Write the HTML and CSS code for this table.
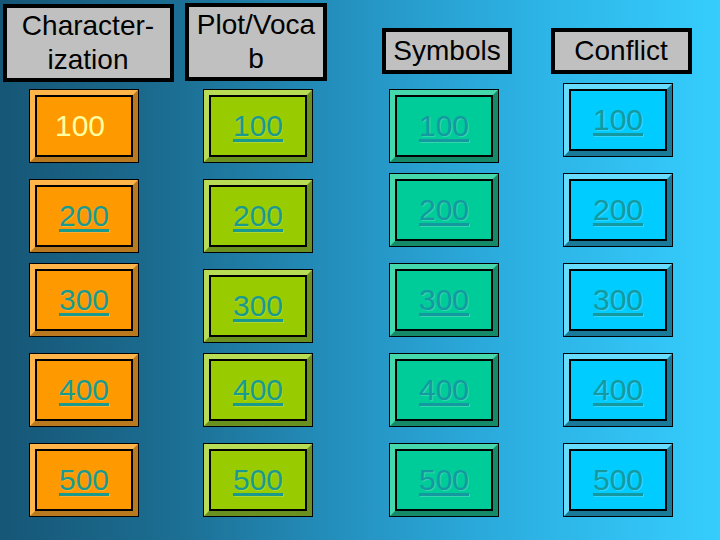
FILE: index.html
```html
<!DOCTYPE html>
<html>
<head>
<meta charset="utf-8">
<link rel="stylesheet" href="styles.css">
</head>
<body>
<div class="board">
  <div class="head head-char">Character-<br>ization</div>
  <div class="head head-plot">Plot/Voca<br>b</div>
  <div class="head head-sym">Symbols</div>
  <div class="head head-con">Conflict</div>

  <div class="btn c1 low"><span class="done">100</span></div>
  <div class="btn c2 low"><a href="#">100</a></div>
  <div class="btn c3 low"><a href="#">100</a></div>
  <div class="btn c4"><a href="#">100</a></div>

  <div class="btn c1 low"><a href="#">200</a></div>
  <div class="btn c2 low"><a href="#">200</a></div>
  <div class="btn c3"><a href="#">200</a></div>
  <div class="btn c4"><a href="#">200</a></div>

  <div class="btn c1"><a href="#">300</a></div>
  <div class="btn c2 low"><a href="#">300</a></div>
  <div class="btn c3"><a href="#">300</a></div>
  <div class="btn c4"><a href="#">300</a></div>

  <div class="btn c1"><a href="#">400</a></div>
  <div class="btn c2"><a href="#">400</a></div>
  <div class="btn c3"><a href="#">400</a></div>
  <div class="btn c4"><a href="#">400</a></div>

  <div class="btn c1"><a href="#">500</a></div>
  <div class="btn c2"><a href="#">500</a></div>
  <div class="btn c3"><a href="#">500</a></div>
  <div class="btn c4"><a href="#">500</a></div>
</div>
</body>
</html>
```
FILE: styles.css
```css
html, body {
  margin: 0;
  padding: 0;
}
body {
  width: 720px;
  height: 540px;
  overflow: hidden;
  background: linear-gradient(to right, #165676 0%, #1c6f94 25%, #2594c3 50%, #2db4e6 75%, #35cdfd 100%);
  font-family: "Liberation Sans", Arial, sans-serif;
}
.board {
  display: grid;
  grid-template-columns: 168px 180px 192px 156px;
  grid-template-rows: 83px repeat(5, 90px);
  justify-items: center;
  align-items: start;
}
.head {
  box-sizing: border-box;
  border: 4px solid #000;
  background: #c0c0c0;
  color: #000;
  font-size: 28px;
  line-height: 34px;
  text-align: center;
  display: flex;
  align-items: center;
  justify-content: center;
}
.head-char { width: 171px; height: 78px; margin-top: 4px; margin-left: 8px; }
.head-plot { width: 142px; height: 78px; margin-top: 3px; margin-right: 4px; }
.head-sym  { width: 130px; height: 46px; margin-top: 28px; margin-left: 6px; }
.head-con  { width: 141px; height: 46px; margin-top: 28px; margin-left: 6px; }

.btn {
  box-sizing: border-box;
  width: 108px;
  height: 72px;
  margin: 1px;
  border: 5px solid;
  box-shadow: 0 0 0 1px #000, inset 0 0 0 2px #000;
  display: flex;
  align-items: center;
  justify-content: center;
  font-size: 30px;
}
.btn.low { margin-top: 7px; }
.c1 { background: #ff9900; border-color: #ffb54a #b8791f #b8791f #ffb54a; }
.c2 { background: #99cc00; border-color: #b8dc55 #6a9020 #6a9020 #b8dc55; }
.c3 { background: #00cc99; border-color: #45d8ad #148a68 #148a68 #45d8ad; }
.c4 { background: #00ccff; border-color: #66dcff #187a98 #187a98 #66dcff; }

.btn a {
  color: #199a8c;
  text-decoration: underline;
  text-decoration-thickness: 3px;
  text-underline-offset: 3px;
  text-shadow: 1px 1px 0 rgba(255, 255, 255, 0.2);
}
.c3 a, .c4 a {
  color: #1599a0;
}
.done {
  color: #ffffa0;
  margin-right: 8px;
}
```
